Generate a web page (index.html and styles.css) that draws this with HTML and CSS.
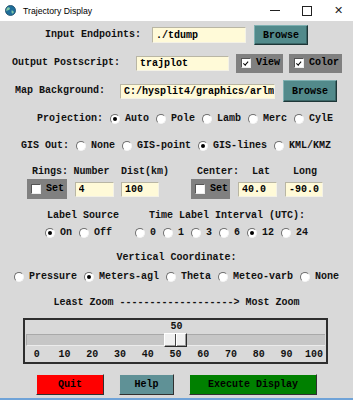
FILE: index.html
```html
<!DOCTYPE html>
<html lang="en">
<head>
  <meta charset="UTF-8" />
  <title>Trajectory Display</title>
  <link rel="stylesheet" href="styles.css">
</head>
<body>
<div class="window">

  <div class="titlebar">
    <svg class="app-icon" width="11" height="11" viewBox="0 0 12 12">
      <circle cx="6" cy="6" r="5.5" fill="#1f6e9a"/>
      <path d="M3 2.5 C5 2 6 3.5 5 5 C4 6 2.5 5.5 2 7 C1 6 1.2 3.5 3 2.5Z" fill="#7fc6a6"/>
      <path d="M7 6 C8.5 5.5 10 6.5 9.5 8.5 C8.5 10 7 9.5 7.2 8 Z" fill="#7fc6a6"/>
      <circle cx="6" cy="6" r="5.5" fill="none" stroke="#0d3d5a" stroke-width="0.8"/>
    </svg>
    <span class="title">Trajectory Display</span>
    <div class="winbtns">
      <span class="wb wb-min"></span>
      <span class="wb wb-max"></span>
      <span class="wb wb-close">✕</span>
    </div>
  </div>

  <div class="row r-input">
    <span class="lbl">Input Endpoints:</span>
    <input class="entry e-input" value="./tdump">
    <button class="btn browse">Browse</button>
  </div>

  <div class="row r-output">
    <span class="lbl">Output Postscript:</span>
    <input class="entry e-output" value="trajplot">
    <label class="check-frame f-view"><span class="check on"></span>View</label>
    <label class="check-frame f-color"><span class="check on"></span>Color</label>
  </div>

  <div class="row r-map">
    <span class="lbl">Map Background:</span>
    <input class="entry e-map" value="C:/hysplit4/graphics/arlmap">
    <button class="btn browse tall">Browse</button>
  </div>

  <div class="row r-proj">
    <span class="lbl">Projection:</span>
    <label class="opt"><span class="radio on"></span>Auto</label>
    <label class="opt"><span class="radio"></span>Pole</label>
    <label class="opt"><span class="radio"></span>Lamb</label>
    <label class="opt"><span class="radio"></span>Merc</label>
    <label class="opt"><span class="radio"></span>CylE</label>
  </div>

  <div class="row r-gis">
    <span class="lbl">GIS Out:</span>
    <label class="opt"><span class="radio"></span>None</label>
    <label class="opt"><span class="radio"></span>GIS-point</label>
    <label class="opt"><span class="radio on"></span>GIS-lines</label>
    <label class="opt"><span class="radio"></span>KML/KMZ</label>
  </div>

  <div class="rings">
    <div class="ring-group rg-rings">
      <span class="hd hd-rings">Rings:</span>
      <span class="hd hd-number">Number</span>
      <span class="hd">Dist(km)</span>
      <label class="check-frame f-set"><span class="check"></span>Set</label>
      <input class="entry e-small" value="4">
      <input class="entry e-small" value="100">
    </div>
    <div class="ring-group rg-center">
      <span class="hd hd-center">Center:</span>
      <span class="hd hd-lat">Lat</span>
      <span class="hd hd-long">Long</span>
      <label class="check-frame f-set"><span class="check"></span>Set</label>
      <input class="entry e-small" value="40.0">
      <input class="entry e-small" value="-90.0">
    </div>
  </div>

  <div class="row r-labels">
    <span class="lbl">Label Source</span>
    <span class="lbl">Time Label Interval (UTC):</span>
  </div>

  <div class="row r-labelopts">
    <div class="opt-group">
      <label class="opt"><span class="radio on"></span>On</label>
      <label class="opt"><span class="radio"></span>Off</label>
    </div>
    <div class="opt-group">
      <label class="opt"><span class="radio"></span>0</label>
      <label class="opt"><span class="radio"></span>1</label>
      <label class="opt"><span class="radio"></span>3</label>
      <label class="opt"><span class="radio"></span>6</label>
      <label class="opt"><span class="radio on"></span>12</label>
      <label class="opt"><span class="radio"></span>24</label>
    </div>
  </div>

  <div class="row r-vert center">
    <span class="lbl">Vertical Coordinate:</span>
  </div>

  <div class="row r-vertopts">
    <label class="opt"><span class="radio"></span>Pressure</label>
    <label class="opt"><span class="radio on"></span>Meters-agl</label>
    <label class="opt"><span class="radio"></span>Theta</label>
    <label class="opt"><span class="radio"></span>Meteo-varb</label>
    <label class="opt"><span class="radio"></span>None</label>
  </div>

  <div class="row r-zoom center">
    <span class="lbl">Least Zoom -------------------&gt; Most Zoom</span>
  </div>

  <div class="scale">
    <div class="scale-value">50</div>
    <div class="trough">
      <span class="slider"></span>
    </div>
    <div class="ticks">
      <span>0</span><span>10</span><span>20</span><span>30</span><span>40</span><span>50</span>
      <span>60</span><span>70</span><span>80</span><span>90</span><span>100</span>
    </div>
  </div>

  <div class="actions">
    <button class="btn quit">Quit</button>
    <button class="btn help">Help</button>
    <button class="btn execute">Execute Display</button>
  </div>

</div>
</body>
</html>
```

FILE: styles.css
```css
body {
  margin: 0;
  font-family: 'Liberation Mono', 'DejaVu Sans Mono', monospace;
  font-weight: bold;
  font-size: 10px;
  color: #111;
}

.window {
  width: 353px;
  height: 400px;
  box-sizing: border-box;
  background: #d9d9d9;
  border-bottom: 2px solid #6fa3d8;
  display: flex;
  flex-direction: column;
  overflow: hidden;
}

/* title bar */
.titlebar {
  height: 21px;
  flex-shrink: 0;
  background: #fff;
  display: flex;
  align-items: center;
  font-family: 'Liberation Sans', 'Noto Sans', sans-serif;
  font-weight: normal;
  font-size: 8.7px;
  color: #000;
}

.app-icon {
  margin-left: 5px;
  margin-right: 7px;
}

.winbtns {
  margin-left: auto;
  display: flex;
  align-items: center;
}

.wb {
  width: 32px;
  height: 21px;
  display: flex;
  align-items: center;
  justify-content: center;
  position: relative;
}

.wb-min::before {
  content: "";
  width: 10px;
  border-top: 1px solid #222;
}

.wb-max::before {
  content: "";
  width: 8px;
  height: 8px;
  border: 1px solid #222;
}

.wb-close {
  font-size: 11px;
  color: #222;
  width: 30px;
}

/* generic rows */
.row {
  display: flex;
  align-items: center;
  flex-shrink: 0;
  white-space: nowrap;
}

.row.center {
  justify-content: center;
}

.lbl {
  line-height: 12px;
}

.entry {
  font: inherit;
  color: #000;
  background: #fffad8;
  box-sizing: border-box;
  border: 1px solid;
  border-color: #b9b6a4 #f4f2e6 #f4f2e6 #b9b6a4;
  padding: 0 0 0 3px;
  margin: 0;
  outline: none;
}

.btn {
  font: inherit;
  color: #000;
  box-sizing: border-box;
  border: 1px solid;
  padding: 0;
  margin: 0;
  cursor: pointer;
}

.browse {
  width: 54px;
  height: 20px;
  background: #528a8b;
  border-color: #7fb0b1 #1e3637 #1e3637 #7fb0b1;
  box-shadow: inset -1px -1px 0 #3b6667;
}

.browse.tall {
  height: 22px;
}

/* checkboxes in grey frames */
.check-frame {
  display: flex;
  align-items: center;
  gap: 5px;
  height: 19px;
  box-sizing: border-box;
  padding-left: 5px;
  background: #808080;
  color: #000;
  line-height: 12px;
}

.check {
  width: 10px;
  height: 10px;
  box-sizing: border-box;
  background: #fff;
  border: 1px solid;
  border-color: #555 #eee #eee #555;
  display: flex;
  align-items: center;
  justify-content: center;
}

.check.on::after {
  content: "";
  width: 4px;
  height: 2px;
  border-left: 1.5px solid #000;
  border-bottom: 1.5px solid #000;
  transform: rotate(-50deg) translate(0, -1px);
}

/* radio buttons */
.opt {
  display: flex;
  align-items: center;
  gap: 5px;
  line-height: 12px;
}

.radio {
  width: 10px;
  height: 10px;
  box-sizing: border-box;
  border-radius: 50%;
  background: #fff;
  border: 1px solid;
  border-color: #6e6e6e #f4f4f4 #f4f4f4 #6e6e6e;
  display: flex;
  align-items: center;
  justify-content: center;
}

.radio.on::after {
  content: "";
  width: 4px;
  height: 4px;
  border-radius: 50%;
  background: #000;
}

/* row specifics */
.r-input {
  height: 28px;
  padding-left: 45px;
}
.r-input .e-input { width: 94px; height: 16px; margin-left: 11px; }
.r-input .browse { margin-left: 8px; }

.r-output {
  height: 28px;
  padding-left: 12px;
}
.r-output .e-output { width: 93px; height: 15px; margin-left: 16px; }
.f-view { width: 47px; margin-left: 7px; }
.f-color { width: 53px; margin-left: 6px; }

.r-map {
  height: 28px;
  padding-left: 15px;
}
.r-map .e-map { width: 155px; height: 15px; margin-left: 15px; }
.r-map .browse { margin-left: 8px; }

.r-proj {
  height: 28px;
  padding-left: 37px;
  gap: 7px;
}

.r-gis {
  height: 26px;
  padding-left: 21px;
  gap: 7px;
}

/* rings / center block */
.rings {
  display: flex;
  gap: 32px;
  padding-left: 27px;
  margin-top: 7px;
  flex-shrink: 0;
}

.ring-group {
  display: grid;
  grid-template-columns: 40px 39px 38px;
  grid-template-rows: 12px 20px;
  column-gap: 7.5px;
  row-gap: 1px;
  align-items: center;
  white-space: nowrap;
}

.rg-center {
  grid-template-columns: 39px 39px 38px;
  column-gap: 8px;
}

.hd { line-height: 12px; }
.hd-rings { padding-left: 5px; }
.hd-number { margin-left: -1px; }
.hd-center { padding-left: 6px; }
.hd-lat { padding-left: 14px; }
.hd-long { padding-left: 8px; }

.f-set {
  height: 20px;
  padding-left: 4px;
}

.e-small {
  width: 100%;
  height: 15px;
}

.r-labels {
  height: 14px;
  margin-top: 10px;
  padding-left: 47px;
  gap: 30px;
}

.r-labelopts {
  height: 14px;
  margin-top: 3px;
  padding-left: 45px;
  gap: 23px;
}

.opt-group {
  display: flex;
  gap: 7px;
}

.r-vert {
  height: 14px;
  margin-top: 11px;
}

.r-vertopts {
  height: 14px;
  margin-top: 5px;
  padding-left: 14px;
  gap: 7px;
}

.r-zoom {
  height: 14px;
  margin-top: 12px;
}

/* zoom scale */
.scale {
  margin: 8px 0 0 23px;
  width: 305px;
  height: 46px;
  box-sizing: border-box;
  border: 2px solid #2e2e2e;
  flex-shrink: 0;
  display: flex;
  flex-direction: column;
}

.scale-value {
  text-align: center;
  line-height: 12px;
  margin-top: 1px;
  padding-left: 2px;
}

.trough {
  position: relative;
  height: 12px;
  margin: 1px 1px 0;
  box-sizing: border-box;
  background: #c6c6c6;
  border-top: 1px solid #a9a9a9;
  border-left: 1px solid #a9a9a9;
  border-bottom: 1px solid #ececec;
}

.slider {
  position: absolute;
  left: 50%;
  top: -2px;
  width: 23px;
  height: 14px;
  margin-left: -12px;
  box-sizing: border-box;
  background: #f0f0f0;
  border: 1px solid;
  border-color: #fff #2a2a2a #2a2a2a #fff;
  box-shadow: inset -1px -1px 0 #9a9a9a;
}

.slider::after {
  content: "";
  position: absolute;
  left: 10px;
  top: 0;
  bottom: 0;
  width: 1px;
  background: #444;
  box-shadow: 1px 0 0 #fff;
}

.ticks {
  display: grid;
  grid-template-columns: repeat(11, 1fr);
  text-align: center;
  line-height: 12px;
  margin-top: 3px;
  margin-left: -2px;
  margin-right: -2px;
}

/* bottom buttons */
.actions {
  display: flex;
  justify-content: center;
  gap: 15px;
  margin-top: 10px;
  flex-shrink: 0;
}

.actions .btn {
  height: 21px;
  border-color: #d8d8d8 #303030 #303030 #d8d8d8;
}

.quit {
  width: 68px;
  background: #ff0000;
}

.help {
  width: 55px;
  background: #5f9196;
}

.execute {
  width: 128px;
  background: #008000;
}
```
